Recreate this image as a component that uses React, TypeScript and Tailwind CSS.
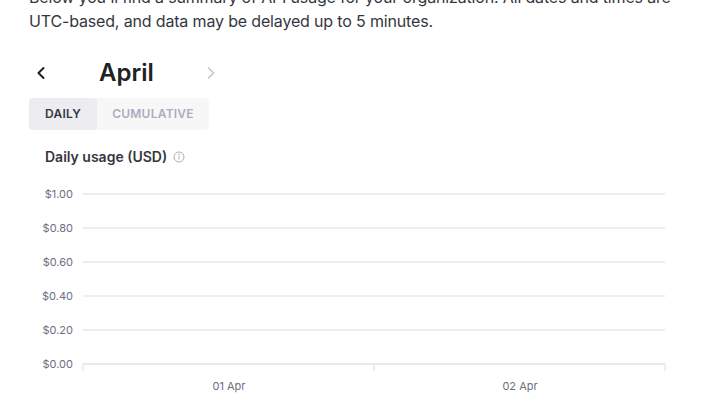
import React from "react";

const yLabels = ["$1.00", "$0.80", "$0.60", "$0.40", "$0.20", "$0.00"];

function Chart() {
  const left = 83;
  const right = 665;
  const top = 194;
  const step = 34;
  return (
    <svg width="703" height="240" viewBox="0 170 703 240" className="block" style={{ fontFamily: "Inter, 'Noto Sans', sans-serif" }}>
      {yLabels.map((l, i) => (
        <g key={l}>
          <line x1={left} x2={right} y1={top + i * step} y2={top + i * step} stroke="#e9e9e9" strokeWidth={i === 5 ? 2 : 1.5} />
          <text x={73} y={top + i * step + 3.5} textAnchor="end" fontSize="11" fill="#6e6e80">{l}</text>
        </g>
      ))}
      {[left, 374, right].map((x) => (
        <line key={x} x1={x} x2={x} y1={364} y2={371} stroke="#e9e9e9" strokeWidth="1.5" />
      ))}
      <text x={229} y={390} textAnchor="middle" fontSize="11" fill="#6e6e80">01 Apr</text>
      <text x={520} y={390} textAnchor="middle" fontSize="11" fill="#6e6e80">02 Apr</text>
    </svg>
  );
}

export default function App() {
  return (
    <div className="w-[703px] h-[400px] overflow-hidden bg-white" style={{ fontFamily: "Inter, 'Noto Sans', sans-serif" }}>
      <div className="-mt-[15px] pl-[29px] pr-[10px]">
        <p className="text-[16px] leading-[24px] text-[#353740] tracking-[-0.01em]">
          Below you'll find a summary of API usage for your organization. All dates and times are UTC-based, and data may be delayed up to 5 minutes.
        </p>
        <div className="mt-[24px] flex items-center h-[32px]">
          <button className="w-[24px] h-[24px] flex items-center justify-center ml-[0px] text-[#202123]">
            <svg width="20" height="20" viewBox="0 0 24 24" fill="none" stroke="currentColor" strokeWidth="2.5" strokeLinecap="round" strokeLinejoin="round">
              <polyline points="15 6 9 12 15 18" />
            </svg>
          </button>
          <div className="ml-[46px] w-[100px] text-[24px] font-semibold text-[#202123] leading-[32px]">April</div>
          <button className="w-[24px] h-[24px] flex items-center justify-center text-[#c5c5d2]">
            <svg width="20" height="20" viewBox="0 0 24 24" fill="none" stroke="currentColor" strokeWidth="2" strokeLinecap="round" strokeLinejoin="round">
              <polyline points="9 6 15 12 9 18" />
            </svg>
          </button>
        </div>
        <div className="mt-[9px] flex w-[180px] h-[32px] rounded-[4px] bg-[#f7f7f8] text-[12px] font-semibold tracking-[0.02em]">
          <div className="w-[68px] flex items-center justify-center rounded-[4px] bg-[#ececf1] text-[#353740]">DAILY</div>
          <div className="flex-1 flex items-center justify-center text-[#acacbe]">CUMULATIVE</div>
        </div>
        <div className="mt-[17px] ml-[16px] flex items-center gap-[6px] text-[14px] font-semibold text-[#353740] leading-[20px]">
          Daily usage (USD)
          <svg width="12" height="12" viewBox="0 0 12 12" fill="none" stroke="#acacbe" strokeWidth="1">
            <circle cx="6" cy="6" r="5" />
            <line x1="6" y1="5.2" x2="6" y2="8.5" />
            <circle cx="6" cy="3.6" r="0.4" fill="#acacbe" />
          </svg>
        </div>
      </div>
      <div className="mt-[3px]">
        <Chart />
      </div>
    </div>
  );
}
